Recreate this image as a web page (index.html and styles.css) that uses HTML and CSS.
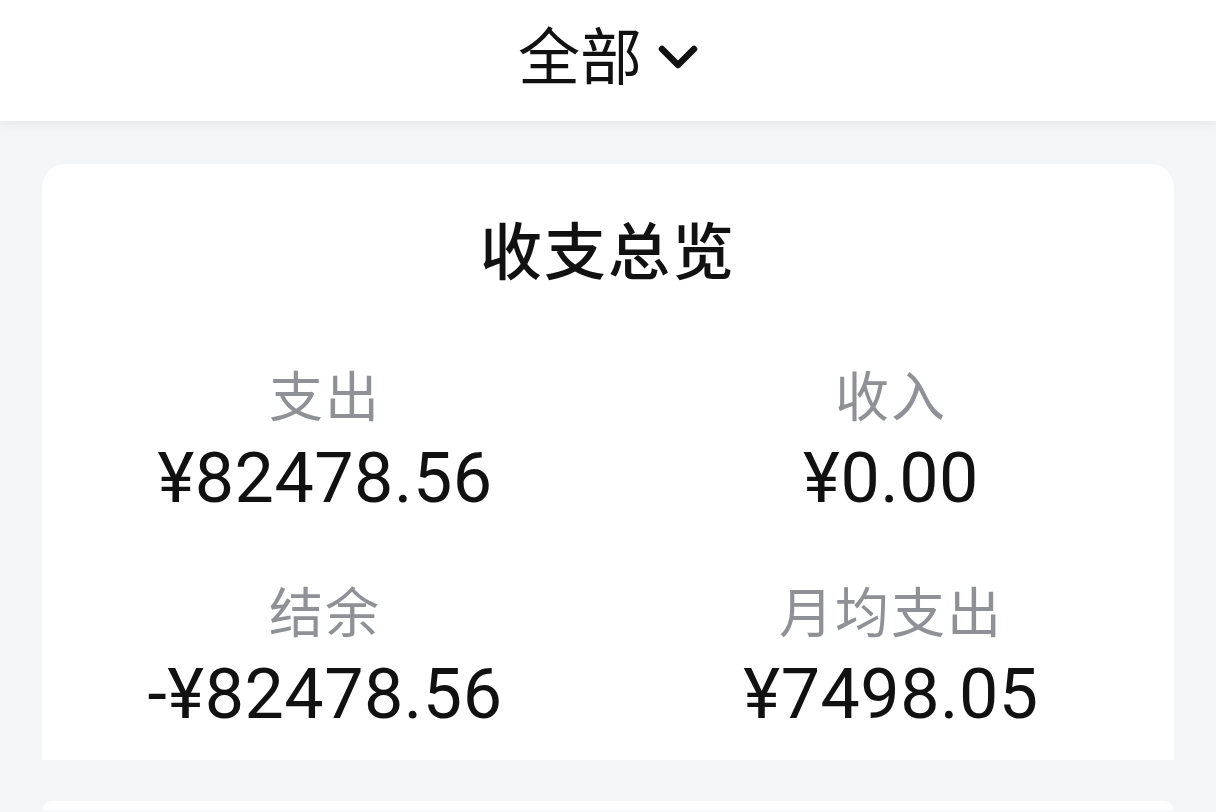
FILE: index.html
```html
<!DOCTYPE html>
<html lang="zh">
<head>
  <meta charset="UTF-8" />
  <meta name="viewport" content="width=device-width, initial-scale=1.0" />
  <title>收支总览</title>
  <link rel="stylesheet" href="styles.css">
</head>
<body>
  <header class="topbar">
    <div class="filter">
      <span>全部</span>
      <svg class="chevron" viewBox="0 0 40 26" width="40" height="26">
        <polyline points="4,4 20,20 36,4" fill="none" stroke="#111" stroke-width="6.5" stroke-linecap="round" stroke-linejoin="round" />
      </svg>
    </div>
  </header>
  <main class="content">
    <section class="card overview">
      <h2 class="card-title">收支总览</h2>
      <div class="stats">
        <div class="stat">
          <div class="stat-label">支出</div>
          <div class="stat-value">¥82478.56</div>
        </div>
        <div class="stat">
          <div class="stat-label">收入</div>
          <div class="stat-value">¥0.00</div>
        </div>
        <div class="stat">
          <div class="stat-label">结余</div>
          <div class="stat-value">-¥82478.56</div>
        </div>
        <div class="stat">
          <div class="stat-label">月均支出</div>
          <div class="stat-value">¥7498.05</div>
        </div>
      </div>
    </section>
    <section class="card next"></section>
  </main>
</body>
</html>
```

FILE: styles.css
```css
html, body {
  height: 100%;
}
body {
  margin: 0;
  background: #f4f5f7;
  font-family: "Noto Sans CJK SC", sans-serif;
  color: #111;
  overflow: hidden;
}
.topbar {
  height: 121px;
  background: #fff;
  box-shadow: 0 2px 10px rgba(0,0,0,0.07);
  display: flex;
  align-items: center;
  justify-content: center;
  position: relative;
  z-index: 1;
}
.filter {
  display: flex;
  align-items: center;
  gap: 16px;
  font-size: 62px;
  line-height: 1;
  margin-top: -16px;
}
.chevron {
  display: block;
  margin-top: 10px;
}
.content {
  padding: 43px 42px 0;
  display: flex;
  flex-direction: column;
  gap: 41px;
}
.card {
  background: #fff;
  border-radius: 24px 24px 0 0;
}
.overview {
  padding: 48px 0 26px;
}
.card-title {
  margin: 0;
  text-align: center;
  font-size: 62px;
  line-height: 72px;
  font-weight: 500;
  letter-spacing: 2px;
}
.stats {
  margin-top: 78px;
  display: grid;
  grid-template-columns: 1fr 1fr;
  row-gap: 60px;
}
.stat {
  display: flex;
  flex-direction: column;
  align-items: center;
  gap: 12px;
}
.stat-label {
  font-size: 54px;
  line-height: 64px;
  color: #8f9196;
  letter-spacing: 2px;
}
.stat-value {
  font-family: Roboto, "Noto Sans CJK SC", sans-serif;
  font-size: 70px;
  line-height: 80px;
  font-weight: 400;
  letter-spacing: 0.5px;
}
.next {
  height: 10px;
}
```
